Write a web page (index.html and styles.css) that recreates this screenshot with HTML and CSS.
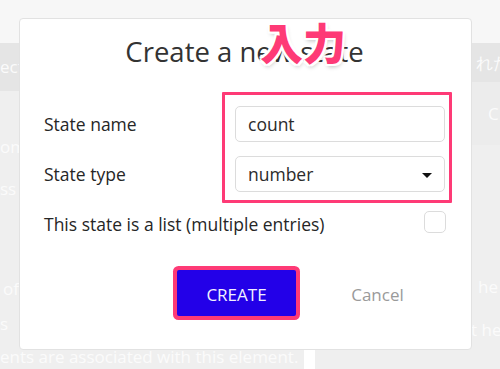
FILE: index.html
```html
<!doctype html>
<html lang="en">
<head>
<meta charset="utf-8">
<title>Create a new state</title>
<meta name="viewport" content="width=device-width, initial-scale=1">
<link rel="stylesheet" href="styles.css">
</head>
<body>

	<div class="page">
		<div class="topbar"></div>

		<div class="panels">
			<div class="panel left">
				<div class="band dark">ect</div>
				<div class="ghost g-om">om</div>
				<div class="ghost g-ss">ss</div>
				<div class="ghost g-of">of</div>
				<div class="ghost g-s">s</div>
				<div class="ghost g-ents">ents are associated with this element.</div>
			</div>
			<div class="gutter"></div>
			<div class="panel right">
				<div class="band dark short">れた</div>
				<div class="band mid">C</div>
				<div class="ghost g-he">he e</div>
				<div class="ghost g-hel">t hel</div>
			</div>
		</div>

		<!-- the dialog sits over the editor -->
		<div class="modal">
			<h2 class="title">Create a new state</h2>

			<div class="form">
				<div class="label">State name</div>
				<div class="field">count</div>

				<div class="label">State type</div>
				<div class="field select">number <span class="caret"></span></div>

				<div class="list-row">
					<span class="label">This state is a list (multiple entries)</span>
					<span class="checkbox"></span>
				</div>
			</div>

			<div class="actions">
				<button class="create">CREATE</button>
				<button class="cancel">Cancel</button>
			</div>

			<div class="mark-box"></div>
			<div class="mark-label">入力</div>
		</div>
	</div>

</body>
</html>
```

FILE: styles.css
```css
* { box-sizing: border-box; }

body {
	margin: 0;
	font-family: "Open Sans", "Noto Sans", sans-serif;
	color: #333;
	background-color: #efefef;
}

.page {
	position: relative;
	width: 500px;
	height: 369px;
	overflow: hidden;
}

.topbar {
	height: 43px;
	background-color: #f7f7f7;
}

.panels {
	display: flex;
	height: 326px;
}

.panel {
	display: flex;
	flex-direction: column;
	overflow: hidden;
	white-space: nowrap;
	color: #fbfbfb;
	font-size: 17px;
	line-height: 24px;
}

.left { width: 304px; }

.gutter {
	width: 11px;
	background-color: #fff;
}

.right {
	flex: 1;
}

.band { display: flex; align-items: center; }
.left .band { height: 49px; }
.dark { background-color: #e5e5e5; }
.short { height: 39px; padding-left: 161px; }
.mid { height: 63px; padding-left: 173px; background-color: #ececec; }

.g-om { margin-top: 44px; }
.g-ss { margin-top: 18px; }
.g-of { margin-top: 76px; padding-left: 3px; }
.g-s { margin-top: 11px; }
.g-ents { margin-top: 9px; }

.g-he { margin-top: 130px; padding-left: 163px; }
.g-hel { margin-top: 19px; padding-left: 156px; }

/* dialog */

.modal {
	position: absolute;
	left: 19px;
	top: 18px;
	width: 453px;
	height: 332px;
	padding: 14px 26px 0 24px;
	background-color: #fff;
	border: 1px solid #e2e2e2;
	border-radius: 4px;
}

.title {
	margin: 0;
	font-size: 27.5px;
	font-weight: 400;
	line-height: 38px;
	text-align: center;
	color: #333;
}

.form {
	display: grid;
	grid-template-columns: 191px 210px;
	grid-template-rows: 36px 36px auto;
	row-gap: 14px;
	margin-top: 35px;
	align-items: center;
}

.label {
	font-size: 17.5px;
	line-height: 24px;
	color: #262626;
}

.field {
	display: flex;
	align-items: center;
	height: 36px;
	padding: 0 12px;
	border: 1px solid #dcdcdc;
	border-radius: 5px;
	font-size: 17.5px;
	color: #2b2b2b;
}

.select { justify-content: space-between; }

.caret {
	width: 0;
	height: 0;
	border-left: 5px solid transparent;
	border-right: 5px solid transparent;
	border-top: 5px solid #111;
	margin-top: 2px;
}

.list-row {
	grid-column: 1 / 3;
	align-self: start;
	height: 22px;
	margin-top: 5px;
	display: flex;
	align-items: center;
	justify-content: space-between;
}

.list-row .label { padding-top: 4px; }

.checkbox {
	width: 22px;
	height: 22px;
	margin-right: -1px;
	border: 1px solid #dcdcdc;
	border-radius: 5px;
}

.actions {
	display: flex;
	gap: 22px;
	margin-top: 37px;
	padding-left: 133px;
}

.actions button {
	width: 119px;
	height: 46px;
	padding: 3px 0 0;
	font-family: inherit;
	font-size: 17px;
	border: none;
	cursor: pointer;
}

.create {
	background-color: #2300e8;
	color: #f2f0ff;
	border-radius: 2px;
	box-shadow: 0 0 0 4px #fe3a76;
}

.cancel {
	background: none;
	color: #9a9a9a;
}

/* annotations over the screenshot */

.mark-box {
	position: absolute;
	left: 202px;
	top: 73px;
	width: 230px;
	height: 111px;
	border: 3px solid #fe3a76;
	border-radius: 1px;
}

.mark-label {
	position: absolute;
	left: 240px;
	top: 1px;
	font-family: "Noto Sans CJK JP", sans-serif;
	font-size: 43px;
	font-weight: 900;
	line-height: 43px;
	color: #fe3a76;
	text-shadow:
		2px 0 0 #fff, -2px 0 0 #fff, 0 2px 0 #fff, 0 -2px 0 #fff,
		2px 2px 0 #fff, -2px -2px 0 #fff, 2px -2px 0 #fff, -2px 2px 0 #fff,
		1px 3px 4px rgba(0,0,0,0.25);
}
```
